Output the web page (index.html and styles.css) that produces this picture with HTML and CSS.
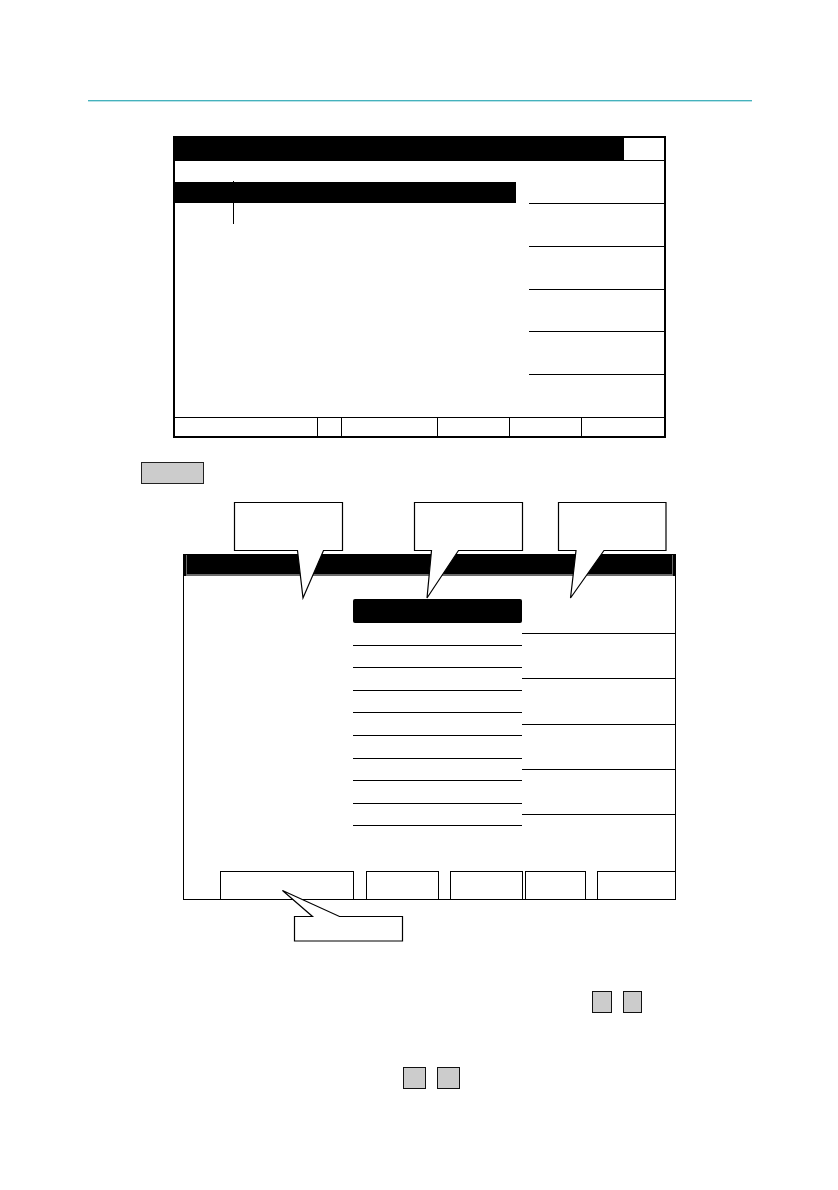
FILE: index.html
```html
<!DOCTYPE html>
<html lang="en">
<head>
<meta charset="utf-8">
<title>Screen diagram</title>
<link rel="stylesheet" href="styles.css">
</head>
<body>
<div class="page">
  <div class="rule"></div>

  <div class="screen1">
    <div class="s1-title">
      <div class="s1-title-bar"></div>
      <div class="s1-title-cell"></div>
    </div>
    <div class="s1-body">
      <div class="s1-left">
        <div class="s1-highlight"></div>
      </div>
      <div class="s1-right">
        <div class="s1-rline"></div>
        <div class="s1-rline"></div>
        <div class="s1-rline"></div>
        <div class="s1-rline"></div>
        <div class="s1-rline"></div>
      </div>
      <div class="s1-cursor"></div>
    </div>
    <div class="s1-foot">
      <div class="s1-cell"></div>
      <div class="s1-cell"></div>
      <div class="s1-cell"></div>
      <div class="s1-cell"></div>
      <div class="s1-cell"></div>
      <div class="s1-cell"></div>
    </div>
  </div>

  <div class="key-wide"></div>

  <div class="screen2">
    <div class="s2-title"></div>
    <div class="s2-body">
      <div class="s2-left"></div>
      <div class="s2-mid">
        <div class="s2-highlight"></div>
        <div class="s2-item"></div>
        <div class="s2-item"></div>
        <div class="s2-item"></div>
        <div class="s2-item"></div>
        <div class="s2-item"></div>
        <div class="s2-item"></div>
        <div class="s2-item"></div>
        <div class="s2-item"></div>
        <div class="s2-item"></div>
      </div>
      <div class="s2-right">
        <div class="s2-rline"></div>
        <div class="s2-rline"></div>
        <div class="s2-rline"></div>
        <div class="s2-rline"></div>
        <div class="s2-rline"></div>
      </div>
    </div>
    <div class="s2-foot">
      <div class="s2-btn b1"></div>
      <div class="s2-btn b2"></div>
      <div class="s2-btn b3"></div>
      <div class="s2-btn b4"></div>
      <div class="s2-btn b5"></div>
    </div>
  </div>

  <div class="keys keys-a">
    <div class="key key-a1"></div>
    <div class="key key-a2"></div>
  </div>
  <div class="keys keys-b">
    <div class="key key-b"></div>
    <div class="key key-b"></div>
  </div>

  <svg class="callouts" width="838" height="1190" viewBox="0 0 838 1190" aria-hidden="true">
    <path d="M234.5,502.5 H342.5 V550.5 H323.5 L303,598 L297.5,550.5 H234.5 Z"/>
    <path d="M414.5,502.5 H522.5 V550.5 H458.5 L427,598 L431.5,550.5 H414.5 Z"/>
    <path d="M558.5,502.5 H666 V550.5 H604 L570.5,598 L576,550.5 H558.5 Z"/>
    <path d="M294.5,916.5 H312.5 L282.5,890.5 L339.5,916.5 H402.5 V941 H294.5 Z"/>
  </svg>
</div>
</body>
</html>
```

FILE: styles.css
```css
* { box-sizing: border-box; }

html, body {
  margin: 0;
  padding: 0;
  background: #ffffff;
  font-family: "Liberation Sans", Arial, sans-serif;
}

.page {
  position: relative;
  width: 838px;
  height: 1190px;
  overflow: hidden;
  display: flex;
  flex-direction: column;
  align-items: flex-start;
}

.rule {
  margin-top: 100px;
  margin-left: 88px;
  width: 664px;
  height: 1px;
  background: #45b2bd;
  box-shadow: 0 1px 0 #b9e2e7;
}

/* ---------- Screen 1 ---------- */
.screen1 {
  margin-top: 35px;
  margin-left: 173px;
  width: 493px;
  height: 302px;
  border: 2px solid #000;
  display: flex;
  flex-direction: column;
}

.s1-title {
  height: 23px;
  display: grid;
  grid-template-columns: 1fr 40px;
  border-bottom: 1px solid #000;
}

.s1-title-bar { background: #000; }
.s1-title-cell { background: #fff; }

.s1-body {
  position: relative;
  flex: 1;
  display: flex;
}

.s1-left { width: 341px; }

.s1-highlight {
  margin-top: 21px;
  margin-left: -2px;
  height: 21px;
  background: #000;
}

.s1-right {
  margin-left: 13px;
  flex: 1;
  padding-top: 42px;
}

.s1-rline {
  height: 42.75px;
  border-top: 1px solid #000;
}

.s1-cursor {
  position: absolute;
  left: 58px;
  top: 20px;
  width: 1px;
  height: 43px;
  background: #000;
}

.s1-foot {
  height: 19px;
  border-top: 1px solid #000;
  display: grid;
  grid-template-columns: 142px 24px 96px 72px 72px 1fr;
}

.s1-cell + .s1-cell { border-left: 1px solid #000; }

/* ---------- Grey key ---------- */
.key-wide {
  margin-top: 24px;
  margin-left: 141px;
  width: 63px;
  height: 22px;
  background: #cccccc;
  border: 1px solid #222;
}

/* ---------- Screen 2 ---------- */
.screen2 {
  margin-top: 70px;
  margin-left: 183px;
  width: 493px;
  height: 346px;
  border: 1px solid #000;
  display: flex;
  flex-direction: column;
}

.s2-title {
  height: 21px;
  background: #000;
  box-shadow: inset 2px 0 0 #000, inset 3px 0 0 #6a6a6a,
              inset -2px 0 0 #000, inset -3px 0 0 #6a6a6a,
              inset 0 -2px 0 #6a6a6a;
}

.s2-body {
  flex: 1;
  display: flex;
}

.s2-left { width: 169px; }

.s2-mid { width: 169px; }

.s2-highlight {
  margin-top: 23px;
  height: 24px;
  background: #000;
  border-radius: 2px;
}

.s2-item {
  height: 22.6px;
  border-bottom: 1px solid #000;
}

.s2-right {
  flex: 1;
  padding-top: 57px;
}

.s2-rline {
  height: 45.25px;
  border-top: 1px solid #000;
}

.s2-foot {
  height: 28px;
  display: flex;
}

.s2-btn {
  border: 1px solid #000;
  border-bottom: none;
}

.b1 { margin-left: 36px; width: 134px; }
.b2 { margin-left: 12px; width: 73px; }
.b3 { margin-left: 11px; width: 73px; }
.b4 { margin-left: 2px;  width: 61px; }
.b5 { margin-left: 11px; flex: 1; border-right: none; }

/* ---------- Small keys ---------- */
.keys { display: flex; }

.key {
  height: 22px;
  background: #cccccc;
  border: 1px solid #111;
}

.keys-a {
  margin-top: 91px;
  margin-left: 592px;
  gap: 11px;
}

.key-a1 { width: 20px; }
.key-a2 { width: 19px; }

.keys-b {
  margin-top: 54px;
  margin-left: 403px;
  gap: 11px;
}

.key-b { width: 23px; }

/* ---------- Callout overlay ---------- */
.callouts {
  position: absolute;
  top: 0;
  left: 0;
  pointer-events: none;
}

.callouts path {
  fill: #ffffff;
  stroke: #000;
  stroke-width: 1.2;
  stroke-linejoin: miter;
}
```
